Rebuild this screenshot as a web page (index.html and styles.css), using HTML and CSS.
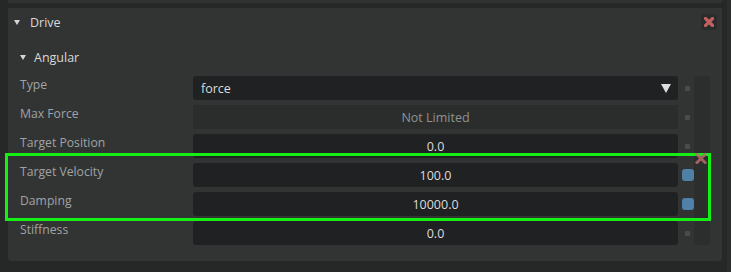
FILE: index.html
```html
<!DOCTYPE html>
<html>

<head>
  <meta charset="UTF-8" />
  <title>Drive</title>
  <link rel="stylesheet" href="styles.css">
</head>

<body>
  <div class="page">
    <div class="main">
      <div class="prev-panel"></div>
      <div class="panel">
        <div class="panel-header">
          <span class="caret"></span>
          <span class="panel-title">Drive</span>
          <span class="close-btn">
            <svg width="10" height="10" viewBox="0 0 10 10">
              <path d="M1.5 1.5 L8.5 8.5 M8.5 1.5 L1.5 8.5" stroke="#c26161" stroke-width="3.2" stroke-linecap="square" />
            </svg>
          </span>
        </div>
        <div class="group-header">
          <span class="caret"></span>
          <span class="group-title">Angular</span>
        </div>
        <div class="fields">
          <div class="rows">
            <div class="label">Type</div>
            <div class="field select">
              <span>force</span>
              <span class="arrow"></span>
            </div>
            <div class="ind"><span class="dot"></span></div>

            <div class="label">Max Force</div>
            <div class="field disabled">Not Limited</div>
            <div class="ind"><span class="dot"></span></div>

            <div class="label">Target Position</div>
            <div class="field">0.0</div>
            <div class="ind"><span class="dot"></span></div>

            <div class="label">Target Velocity</div>
            <div class="field">100.0</div>
            <div class="ind"><span class="check"></span></div>

            <div class="label">Damping</div>
            <div class="field">10000.0</div>
            <div class="ind"><span class="check"></span></div>

            <div class="label">Stiffness</div>
            <div class="field">0.0</div>
            <div class="ind"><span class="dot"></span></div>
          </div>
          <div class="side-col"></div>
        </div>
      </div>
    </div>
    <div class="scroll-track"></div>
  </div>

  <!-- highlight annotation drawn over the panel -->
  <div class="highlight"></div>
  <svg class="highlight-x" width="12" height="11" viewBox="0 0 12 11">
    <path d="M2 1.5 L10 9.5 M10 1.5 L2 9.5" stroke="#b86a6a" stroke-width="3" stroke-linecap="square" opacity="0.85" />
  </svg>
</body>

</html>
```

FILE: styles.css
```css
body {
  margin: 0;
  background: #262727;
  font-family: "Open Sans", "Noto Sans", sans-serif;
  font-size: 12px;
  width: 731px;
  height: 272px;
  overflow: hidden;
}

.page {
  display: flex;
  height: 272px;
}

.main {
  margin-left: 8px;
  width: 714px;
}

.prev-panel {
  height: 3px;
  background: #313333;
  margin-bottom: 5px;
}

.scroll-track {
  width: 4px;
  margin-left: 5px;
  background: #2c2d2d;
}

.panel {
  background: #323434;
  border-radius: 0 0 3px 3px;
  padding: 0 12px 16px 12px;
  height: 253px;
  box-sizing: border-box;

  .panel-header {
    display: flex;
    align-items: center;
    height: 28px;
    margin-left: -6px;
    margin-right: -7px;
  }

  .group-header {
    display: flex;
    align-items: center;
    height: 28px;
    margin-top: 7px;
    margin-left: 0;

    .caret {
      margin-right: 8px;
    }
  }
}

.caret {
  width: 0;
  height: 0;
  border-left: 3px solid transparent;
  border-right: 3px solid transparent;
  border-top: 5px solid #d6d6d6;
  margin-right: 10px;
  margin-top: 1px;
}

.panel-title,
.group-title {
  color: #d8d8d8;
  font-size: 12.5px;
}

.close-btn {
  margin-left: auto;
  width: 16px;
  height: 16px;
  border-radius: 3px;
  background: #2a2b2b;
  display: flex;
  align-items: center;
  justify-content: center;
}

.fields {
  display: flex;
  margin-top: 5px;
}

.rows {
  display: grid;
  grid-template-columns: 173px 485px 16px;
  grid-auto-rows: 24px;
  row-gap: 5px;
}

.side-col {
  width: 16px;
  background: #2c2e2e;
  border-radius: 3px;
}

.label {
  color: #a0a3a4;
  line-height: 18px;
  white-space: nowrap;
  font-size: 12.2px;
}

.field {
  background: #202122;
  border-radius: 3px;
  color: #dcdcdc;
  font-size: 12.5px;
  display: flex;
  align-items: center;
  justify-content: center;
  padding-top: 1px;
}

.field.disabled {
  background: #2b2d2d;
  color: #8f9292;
  border-radius: 0;
}

.field.select {
  justify-content: space-between;
  padding-left: 8px;
  padding-right: 7px;

  .arrow {
    width: 0;
    height: 0;
    border-left: 5px solid transparent;
    border-right: 5px solid transparent;
    border-top: 9px solid #dedede;
  }
}

.ind {
  position: relative;
  display: flex;
  align-items: center;

  .dot {
    width: 5px;
    height: 5px;
    border-radius: 1px;
    background: #4a4c4c;
    margin-left: 7px;
  }

  .check {
    width: 12px;
    height: 12px;
    border-radius: 3px;
    background: #4f80a8;
    margin-left: 4px;
  }
}

.highlight {
  position: absolute;
  left: 5px;
  top: 153px;
  width: 700px;
  height: 62px;
  border: 3px solid #14f014;
}

.highlight-x {
  position: absolute;
  left: 695px;
  top: 153px;
}
```
